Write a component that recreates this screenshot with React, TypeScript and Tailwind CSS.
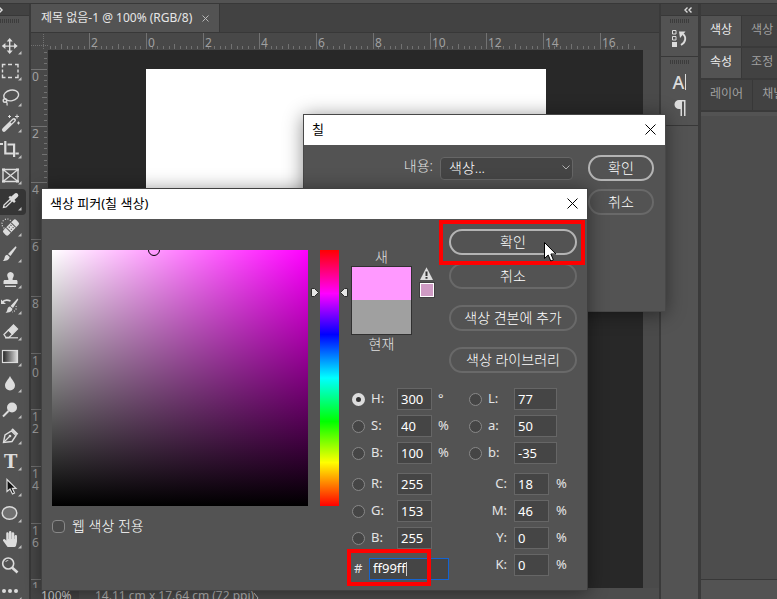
import { useState, type ReactNode } from "react";
import { FaHandPaper } from "react-icons/fa";

const TOOLS: { name: string; icon: ReactNode }[] = [
  {
    name: "이동",
    icon: (
      <g fill="#dcdcdc" stroke="none">
        <path d="M9 8h1.400v4.400H15v1.400h-4.600V18H9v-4.200H4.500v-1.400H9z" />
        <path d="M9.700 5l3 3.600h-6zM9.700 21l3-3.600h-6zM1.800 13.100l3.600-3v6zM17.700 13.100l-3.600-3v6z" />
      </g>
    ),
  },
  {
    name: "선택 윤곽",
    icon: <path d="M2.500 8.500v-3h3M8 5.500h4M15 5.500h3v3M18 10.500v3M18 15.500v3h-3M12 18.500H8M5.500 18.500h-3v-3M2.500 13.500v-3" strokeWidth="1.400" />,
  },
  {
    name: "올가미",
    icon: (
      <g strokeWidth="1.400">
        <ellipse cx="11.200" cy="10.500" rx="7.500" ry="5.300" transform="rotate(-12 11 10.500)" />
        <circle cx="5" cy="15.500" r="1.800" />
        <path d="M6 16.500c1 1 2 2 1 4" />
      </g>
    ),
  },
  {
    name: "자동 선택",
    icon: (
      <g>
        <path d="M4 18.800L14 9" strokeWidth="4" strokeLinecap="round" />
        <path d="M11 12l3-3" stroke="#535353" strokeWidth="1.600" />
        <path d="M9.500 4v3M8 5.500h3M17 3.500v4M15 5.500h4M18.500 10.500v3M17 12h3" strokeWidth="1" />
      </g>
    ),
  },
  {
    name: "자르기",
    icon: <path d="M0 7h3M5.300 4v12.500h8M7.500 7.500h6.600V20M15.500 16.500h3.300" strokeWidth="2.200" />,
  },
  {
    name: "프레임",
    icon: (
      <g>
        <path d="M3 6.500h15v12H3zM3 6.500l15 12M18 6.500l-15 12" strokeWidth="1.400" />
        <path d="M2 5.500h3v2H2zM16 5.500h3v2h-3zM2 17.500h3v2H2zM16 17.500h3v2h-3z" fill="#dcdcdc" stroke="none" />
      </g>
    ),
  },
  {
    name: "스포이드",
    icon: (
      <g>
        <path d="M3.500 18.500l.5-2.500 7-6.500 1.800 1.800L6 18z" strokeWidth="1.300" />
        <path d="M9.300 7.500l5.600 5.600" strokeWidth="2.400" />
        <path d="M12 10l4-3.600" strokeWidth="4.600" strokeLinecap="round" />
      </g>
    ),
  },
  {
    name: "복구 브러시",
    icon: (
      <g>
        <circle cx="7" cy="9" r="5" strokeWidth="1.200" strokeDasharray="1 1.600" />
        <g transform="rotate(-45 11 12.500)">
          <rect x="2" y="9" width="18" height="7" rx="2" fill="#dcdcdc" stroke="none" />
          <path d="M7.500 9v7M14.500 9v7" stroke="#535353" strokeWidth="1" />
          <path d="M9.500 11h1M12 11h1M9.500 14h1M12 14h1" stroke="#535353" strokeWidth="1.400" />
        </g>
      </g>
    ),
  },
  {
    name: "브러시",
    icon: (
      <g fill="#dcdcdc" stroke="none">
        <path d="M15.600 5.300c1 .5 1 1 .6 1.700L10.500 15 8 13z" />
        <path d="M7.200 13.700l2.500 2.200c-.5 3-3.500 4-7 4 1.600-1 1.500-2 2-3.700.3-1.400 1.300-2.300 2.500-2.500z" />
      </g>
    ),
  },
  {
    name: "복제 도장",
    icon: (
      <g fill="#dcdcdc" stroke="none">
        <path d="M10.500 5a3.300 3.300 0 0 1 3 4.700c-.8 1.500-1 2.300-.8 3.300H16c1 0 1.500.6 1.500 1.500V17h-14v-2.500c0-.9.500-1.500 1.500-1.500h3.300c.2-1 0-1.800-.8-3.300a3.300 3.300 0 0 1 3-4.700z" />
        <path d="M5 18.600h11V20H5z" />
      </g>
    ),
  },
  {
    name: "작업 내역 브러시",
    icon: (
      <g>
        <path d="M17.500 5.500c1 .5.800 1 .4 1.700L13 15l-2.500-2zM10 13.500l2.500 2.200c-.5 3-3.500 4-7 4 1.600-1 1.500-2 2-3.700.3-1.400 1.300-2.300 2.500-2.500z" fill="#dcdcdc" stroke="none" />
        <path d="M2 9.500C4 7 7 6.500 10.500 8" strokeWidth="1.500" />
        <path d="M1 6.500v4.500h5z" fill="#dcdcdc" stroke="none" />
        <path d="M16 13c1 2 0 5-4 6" strokeWidth="1.200" strokeDasharray="1 1.600" />
      </g>
    ),
  },
  {
    name: "지우개",
    icon: (
      <g>
        <path d="M4 15.500l4.500-4.500 4 4-3.500 3.500H6z" strokeWidth="1.300" />
        <path d="M8.500 11L13.500 6l4 4-5 5z" fill="#dcdcdc" strokeWidth="1.300" />
        <path d="M5 18.800h13" strokeWidth="1.200" />
      </g>
    ),
  },
  {
    name: "그레이디언트",
    icon: (
      <g>
        <defs>
          <linearGradient id="tool-gradient">
            <stop offset="0" stopColor="#222" />
            <stop offset="1" stopColor="#ddd" />
          </linearGradient>
        </defs>
        <rect x="2.500" y="5.500" width="15" height="12" fill="url(#tool-gradient)" strokeWidth="1.200" />
      </g>
    ),
  },
  {
    name: "흐림 효과",
    icon: <path d="M10 5c1.500 3.500 5 6 5 9.500a5 5 0 0 1-10 0C5 11 8.500 8.500 10 5z" fill="#dcdcdc" stroke="none" />,
  },
  {
    name: "닷지",
    icon: (
      <g>
        <circle cx="12" cy="10.500" r="5" fill="#dcdcdc" stroke="none" />
        <path d="M8.500 14L3 19.500" strokeWidth="2" />
      </g>
    ),
  },
  {
    name: "펜",
    icon: (
      <g strokeWidth="1.400">
        <path d="M3.500 19.500l1.500-7.500 6.500-4 4.500 4.500-4 6z" />
        <path d="M3.500 19.500l6-6" strokeWidth="1.200" />
        <circle cx="10" cy="13" r="1.300" fill="#dcdcdc" stroke="none" />
        <path d="M12 6l5.500 5.500" strokeWidth="2.200" />
      </g>
    ),
  },
  {
    name: "문자",
    icon: (
      <text x="4" y="19" fontSize="18" fontWeight="700" fontFamily="DejaVu Serif, serif" fill="#dcdcdc" stroke="none">
        T
      </text>
    ),
  },
  {
    name: "패스 선택",
    icon: <path d="M7 4.500v12l3-2.500 2.500 5 2-1-2.200-4.700h3.700z" fill="#111" strokeWidth="1.200" />,
  },
  { name: "타원", icon: <ellipse cx="9.500" cy="12" rx="7.300" ry="6.300" fill="#717171" strokeWidth="1.500" /> },
  { name: "손", icon: <FaHandPaper x={2} y={4} width={16} height={16} color="#dcdcdc" /> },
  {
    name: "돋보기",
    icon: (
      <g>
        <circle cx="8.200" cy="10.500" r="5.500" strokeWidth="1.600" />
        <path d="M5.500 9c.6-1 1.500-1.500 2.700-1.500" strokeWidth="1" />
        <path d="M12 14.500l5.500 5" strokeWidth="2.600" />
      </g>
    ),
  },
  {
    name: "도구 모음 편집",
    icon: (
      <g fill="#dcdcdc" stroke="none">
        <circle cx="4" cy="12" r="2" />
        <circle cx="10" cy="12" r="2" />
        <circle cx="16" cy="12" r="2" />
      </g>
    ),
  },
];

function Gripper() {
  return (
    <svg width="20" height="4" aria-hidden="true">
      {Array.from({ length: 10 }, (_, i) => (
        <rect key={i} x={i * 2} y="0" width="1" height="4" fill="#3c3c3c" />
      ))}
    </svg>
  );
}

function Toolbar() {
  const [active, setActive] = useState("스포이드");
  return (
    <nav className="flex w-[31px] shrink-0 flex-col overflow-hidden border-r-2 border-[#3a3a3a] bg-[#535353]">
      <div className="flex h-3 shrink-0 items-center border-b border-[#383838] bg-[#424242]">
        <svg width="6" height="8" fill="none" stroke="#dcdcdc" strokeWidth="1.500">
          <path d="M-1 1l3 3-3 3" />
        </svg>
      </div>
      <div className="flex h-[17px] shrink-0 pt-[3px]">
        <Gripper />
      </div>
      {TOOLS.map((tool) => (
        <button
          key={tool.name}
          type="button"
          aria-label={tool.name}
          onClick={() => setActive(tool.name)}
          className={tool.name === active ? "h-[26px] w-[26px] shrink-0 rounded-r bg-[#363636]" : "h-[26px] w-[26px] shrink-0"}
        >
          <svg width="26" height="26" fill="none" stroke="#dcdcdc">
            {tool.icon}
            {tool.name !== "돋보기" && <path d="M21.500 18v3.500H18z" fill="#c0c0c0" stroke="none" />}
          </svg>
        </button>
      ))}
    </nav>
  );
}

// 2 cm at 72 ppi
const MAJOR = 56.7;

function HorizontalRuler() {
  const origin = 115;
  const ticks = Array.from({ length: 104 }, (_, i) => i - 17);
  return (
    <svg className="h-[17px] min-w-0 flex-1" shapeRendering="crispEdges">
      <path d="M12.500 1v16M0 12.500h17" stroke="#707070" strokeDasharray="1 1" />
      {ticks.map((t) => (
        <rect key={t} x={Math.round(origin + (t * MAJOR) / 10)} y={t % 10 === 0 ? 0 : t % 5 === 0 ? 11 : 13} width="1" height={t % 10 === 0 ? 16 : t % 5 === 0 ? 5 : 3} fill="#727272" />
      ))}
      {Array.from({ length: 10 }, (_, i) => i - 1).map((n) => (
        <text key={n} x={Math.round(origin + n * MAJOR) + 2} y="14" fontSize="12" fill="#a0a0a0">
          {Math.abs(n * 2)}
        </text>
      ))}
    </svg>
  );
}

function VerticalRuler() {
  const origin = 19;
  const ticks = Array.from({ length: 97 }, (_, i) => i - 3);
  return (
    <svg className="h-full w-[17px] shrink-0 bg-[#484848]" shapeRendering="crispEdges">
      {ticks.map((t) => (
        <rect key={t} x={t % 10 === 0 ? 0 : t % 5 === 0 ? 11 : 13} y={Math.round(origin + (t * MAJOR) / 10)} width={t % 10 === 0 ? 16 : t % 5 === 0 ? 5 : 3} height="1" fill="#727272" />
      ))}
      {Array.from({ length: 10 }, (_, i) => i).map((n) =>
        String(n * 2)
          .split("")
          .map((digit, k) => (
            <text key={`${n}-${k}`} x="1" y={Math.round(origin + n * MAJOR) + 12 + k * 12} fontSize="12" fill="#a0a0a0">
              {digit}
            </text>
          ))
      )}
    </svg>
  );
}

function DocumentArea() {
  return (
    <main className="flex min-w-0 flex-1 flex-col">
      <div className="flex h-[29px] shrink-0 border-b border-[#383838] bg-[#424242]">
        <div className="flex items-center gap-[10px] border-r border-[#383838] bg-[#535353] pr-[10px] pl-[10px] text-xs text-[#e6e6e6]">
          <span>제목 없음-1 @ 100% (RGB/8)</span>
          <button type="button" aria-label="닫기">
            <svg width="7" height="7" stroke="#b8b8b8">
              <path d="M.5 .5l6 6M6.500 .5l-6 6" />
            </svg>
          </button>
        </div>
      </div>
      <div className="flex h-[17px] shrink-0 bg-[#484848] pr-4">
        <HorizontalRuler />
      </div>
      <div className="flex min-h-0 flex-1">
        <VerticalRuler />
        <div className="min-w-0 flex-1 overflow-hidden bg-[#282828] pt-[19px] pl-[98px]">
          <div className="h-[500px] w-[400px] bg-white" />
        </div>
        <div className="w-4 shrink-0 bg-[#4a4a4a]" />
      </div>
      <footer className="flex h-[11px] shrink-0 overflow-hidden bg-[#4d4d4d] text-xs text-[#d8d8d8]">
        <span className="w-12 shrink-0 bg-[#454545] pl-[10px]">100%</span>
        <span className="w-[174px] shrink-0 pl-4 whitespace-nowrap text-[#b8b8b8]">14.11 cm x 17.64 cm (72 ppi)</span>
        <svg width="6" height="14" fill="none" stroke="#c0c0c0" className="mt-1 shrink-0">
          <path d="M1 1l4 5-4 5" />
        </svg>
      </footer>
    </main>
  );
}

function IconDock() {
  return (
    <aside className="flex w-[41px] shrink-0 flex-col border-x-2 border-[#3a3a3a] bg-[#535353]">
      <div className="flex h-3 items-center justify-center border-b border-[#383838] bg-[#424242] pl-4">
        <svg width="8" height="6" fill="none" stroke="#dcdcdc" strokeWidth="1.400">
          <path d="M3.500 .5L1 3l2.500 2.500M7.500 .5L5 3l2.500 2.500" />
        </svg>
      </div>
      <div className="flex h-[41px] flex-col items-center gap-[7px] border-b border-[#383838] pt-[3px]">
        <Gripper />
        <button type="button" aria-label="작업 내역">
          <svg width="17" height="17" fill="none" stroke="#dcdcdc">
            <path d="M1.500 .5h3.500v3.500H1.500zM1.500 6.500h3.500V10H1.500z" />
            <path d="M1 12h5v5H1z" fill="#dcdcdc" stroke="none" />
            <path d="M8 1.500h6.500L9 8z" fill="#dcdcdc" stroke="none" />
            <path d="M12 4c3.500 3 3 8-2 11" strokeWidth="1.800" />
          </svg>
        </button>
      </div>
      <div className="flex h-[69px] flex-col items-center gap-2 border-b border-[#383838] pt-[3px]">
        <Gripper />
        <button type="button" aria-label="문자" className="flex h-5 items-center gap-px">
          <span className="text-lg leading-4 font-medium text-[#dcdcdc]">A</span>
          <span className="h-4 w-px bg-[#dcdcdc]" />
        </button>
        <button type="button" aria-label="단락">
          <svg width="12" height="16" fill="#dcdcdc">
            <path d="M11.500 0v16H10V1.400H8V16H6.500V9H5A4.500 4.500 0 0 1 5 0z" />
          </svg>
        </button>
      </div>
    </aside>
  );
}

function PanelTabs({ tabs, active }: { tabs: string[]; active: number }) {
  return (
    <div className="flex h-8 shrink-0 overflow-hidden border-b-2 border-[#3a3a3a] bg-[#424242] text-xs whitespace-nowrap">
      {tabs.map((tab, i) => (
        <button
          key={tab}
          type="button"
          className={
            i === active
              ? "shrink-0 border-r border-[#383838] bg-[#535353] px-[9px] pb-[2px] text-[#ececec]"
              : "shrink-0 border-r border-[#383838] px-[9px] pb-[2px] text-[#a0a0a0]"
          }
        >
          {tab}
        </button>
      ))}
    </div>
  );
}

function Panels() {
  return (
    <aside className="flex w-[77px] shrink-0 flex-col overflow-hidden border-l border-[#3a3a3a] bg-[#4d4d4d]">
      <div className="h-3 shrink-0 border-b border-[#383838] bg-[#424242]" />
      <PanelTabs tabs={["색상", "색상 견본"]} active={0} />
      <PanelTabs tabs={["속성", "조정"]} active={0} />
      <PanelTabs tabs={["레이어", "채널"]} active={-1} />
      <div className="h-1 bg-[#535353]" />
      <div className="mt-auto h-5 border-t border-[#383838] bg-[#535353]" />
    </aside>
  );
}

function TitleBar({ title }: { title: string }) {
  return (
    <header className="flex h-[30px] items-center justify-between bg-white pr-[9px] pb-px pl-2 text-[13px] text-black">
      <h2>{title}</h2>
      <button type="button" aria-label="닫기">
        <svg width="11" height="11" stroke="#000" strokeWidth="1">
          <path d="M.5 .5l10 10M10.500 .5l-10 10" />
        </svg>
      </button>
    </header>
  );
}

function PillButton({ children, primary }: { children: ReactNode; primary?: boolean }) {
  return (
    <button
      type="button"
      className={
        primary
          ? "h-[26px] w-full rounded-full border-2 border-[#b4b4b4] text-sm leading-5 font-light text-white"
          : "h-[26px] w-full rounded-full border-2 border-[#696969] text-sm leading-5 font-light text-white"
      }
    >
      {children}
    </button>
  );
}

function FillDialog() {
  return (
    <section role="dialog" aria-label="칠" className="absolute top-[114px] left-[303px] h-[198px] w-[363px] border border-[#484848] bg-[#535353] shadow-[0_2px_18px_rgba(0,0,0,0.45)]">
      <TitleBar title="칠" />
      <div className="flex items-start pt-[10px] pr-[11px]">
        <label htmlFor="contents" className="ml-auto pr-[7px] text-sm leading-[22px] font-light text-[#e0e0e0]">
          내용:
        </label>
        <div className="relative mr-[15px] w-[133px]">
          <select id="contents" className="h-[23px] w-full appearance-none rounded-sm border border-[#666] bg-[#454545] px-2 pb-px text-sm leading-5 font-light text-white">
            <option>색상...</option>
          </select>
          <svg width="8" height="6" fill="none" stroke="#b0b0b0" className="pointer-events-none absolute top-[10px] right-[3px]">
            <path d="M.5 .5L4 4 7.500 .5" />
          </svg>
        </div>
        <div className="flex w-[66px] flex-col gap-2">
          <PillButton primary>확인</PillButton>
          <PillButton>취소</PillButton>
        </div>
      </div>
    </section>
  );
}

type FieldProps = { id: string; label: string; value: string; unit?: string };

function ModeField({ id, label, value, unit, wide }: FieldProps & { wide?: boolean }) {
  return (
    <div className="flex h-[22px] items-center">
      <input
        type="radio"
        name="mode"
        id={`mode-${id}`}
        defaultChecked={id === "h"}
        className="h-[13px] w-[13px] appearance-none rounded-full border border-[#888] bg-[#454545] checked:border-4 checked:border-[#dcdcdc] checked:bg-[#333]"
      />
      <label htmlFor={`mode-${id}`} className="w-8 pl-[6px] text-[13px]">
        {label}
      </label>
      <input
        aria-label={label}
        defaultValue={value}
        className={
          wide
            ? "h-[22px] w-[43px] border border-[#666] bg-[#454545] px-[3px] pb-px text-[13px] text-white"
            : "h-[22px] w-[35px] border border-[#666] bg-[#454545] px-[3px] pb-px text-[13px] text-white"
        }
      />
      {unit && <span className="pl-[6px] text-[13px]">{unit}</span>}
    </div>
  );
}

function InkField({ id, label, value }: FieldProps) {
  return (
    <div className="flex h-[22px] items-center">
      <label htmlFor={id} className="w-[45px] pr-[7px] text-right text-[13px]">
        {label}
      </label>
      <input id={id} defaultValue={value} className="h-[22px] w-[35px] border border-[#666] bg-[#454545] px-[3px] pb-px text-[13px] text-white" />
      <span className="pl-[7px] text-[13px]">%</span>
    </div>
  );
}

function ColorFields() {
  const [hex, setHex] = useState("ff99ff");
  return (
    <div className="mt-[15px] flex text-[#e4e4e4]">
      <div className="flex w-[118px] flex-col gap-[9px] pl-px">
        <div className="flex flex-col gap-[5px]">
          <ModeField id="h" label="H:" value="300" unit="°" />
          <ModeField id="s" label="S:" value="40" unit="%" />
          <ModeField id="v" label="B:" value="100" unit="%" />
        </div>
        <div className="flex flex-col gap-[5px]">
          <ModeField id="r" label="R:" value="255" />
          <ModeField id="g" label="G:" value="153" />
          <ModeField id="blue" label="B:" value="255" />
        </div>
        <div className="flex h-[22px] items-center text-[13px]">
          <label htmlFor="hex" className="w-[17px] shrink-0 pl-[2px]">
            #
          </label>
          <div className="flex h-[22px] w-20 shrink-0 items-center border border-[#1464d2] bg-[#454545] pl-[3px]">
            <input id="hex" value={hex} onChange={(e) => setHex(e.target.value)} className="field-sizing-content bg-transparent text-[13px] text-white outline-none" />
            <span className="h-[14px] w-px bg-[#d0d0d0]" />
          </div>
        </div>
      </div>
      <div className="flex flex-col gap-[9px]">
        <div className="flex flex-col gap-[5px]">
          <ModeField id="l" label="L:" value="77" wide />
          <ModeField id="a" label="a:" value="50" wide />
          <ModeField id="b" label="b:" value="-35" wide />
        </div>
        <div className="flex flex-col gap-[5px]">
          <InkField id="c" label="C:" value="18" />
          <InkField id="m" label="M:" value="46" />
          <InkField id="y" label="Y:" value="0" />
          <InkField id="k" label="K:" value="0" />
        </div>
      </div>
    </div>
  );
}

function ColorPickerDialog() {
  return (
    <section role="dialog" aria-label="색상 피커" className="absolute top-[188px] left-[41px] w-[547px] border border-[#404040] bg-[#535353] shadow-[0_2px_18px_rgba(0,0,0,0.45)]">
      <TitleBar title="색상 피커(칠 색상)" />
      <div className="flex px-[10px] pt-[10px] pb-[10px]">
        <div className="mt-[21px] w-64 shrink-0">
          {/* saturation / brightness field */}
          <div className="relative h-64 overflow-hidden bg-[linear-gradient(to_top,#000,transparent),linear-gradient(to_right,#fff,#f0f)]">
            <span className="absolute -top-[6px] left-24 h-3 w-3 rounded-full border border-black" />
          </div>
          <label className="mt-3 flex items-center gap-[7px] text-sm leading-4 font-light text-white">
            <input type="checkbox" className="h-[13px] w-[13px] appearance-none rounded-sm border border-[#888] bg-[#4a4a4a]" />웹 색상 전용
          </label>
        </div>
        <div className="relative mt-[21px] ml-3 h-64 w-[19px] shrink-0 bg-[linear-gradient(to_bottom,#f00,#f0f_17%,#00f_33%,#0ff_50%,#0f0_67%,#ff0_83%,#f00)]">
          <svg width="37" height="9" className="absolute top-[38px] -left-[9px]" fill="#e6e6e6" stroke="#2e2e2e" strokeWidth="1">
            <path d="M.5 .5h3l4 4-4 4h-3z" />
            <path d="M36.500 .5h-3l-4 4 4 4h3z" />
          </svg>
        </div>
        <div className="ml-3 flex-1">
          <div className="flex">
            <div className="flex w-[61px] flex-col items-center pt-[19px] text-sm leading-[18px] font-light text-[#e0e0e0]">
              <span>새</span>
              <div className="w-full border border-[#303030]">
                <div className="h-[33px] bg-[#ff99ff]" />
                <div className="h-[34px] bg-[#a0a0a0]" />
              </div>
              <span>현재</span>
            </div>
            <div className="flex flex-col gap-[2px] pt-[38px] pl-2">
              <svg width="14" height="14" aria-label="인쇄할 수 없는 색상">
                <path d="M6.500 .3L13 13H0z" fill="#dcdcdc" />
                <path d="M6.500 4.500v4.500M6.500 10v1.800" stroke="#333" strokeWidth="2" />
              </svg>
              <button type="button" aria-label="대체 색상" className="h-[14px] w-[14px] border border-white bg-[#cf9bc4] outline outline-[#404040]" />
            </div>
            <div className="ml-auto flex w-32 flex-col gap-4">
              <div className="flex flex-col gap-2">
                <PillButton primary>확인</PillButton>
                <PillButton>취소</PillButton>
              </div>
              <PillButton>색상 견본에 추가</PillButton>
              <PillButton>색상 라이브러리</PillButton>
            </div>
          </div>
          <ColorFields />
        </div>
      </div>
    </section>
  );
}

export default function App() {
  return (
    <div className="relative flex h-screen flex-col overflow-hidden bg-[#535353] font-['Noto_Sans','Noto_Sans_CJK_KR',sans-serif]">
      <div className="h-1 shrink-0 border-b border-[#383838]" />
      <div className="flex min-h-0 flex-1">
        <Toolbar />
        <DocumentArea />
        <IconDock />
        <Panels />
      </div>
      <FillDialog />
      <ColorPickerDialog />
      <div className="pointer-events-none absolute top-[220px] left-[439px] h-[45px] w-[146px] border-4 border-[#ff0000]" />
      <div className="pointer-events-none absolute top-[549px] left-[347px] h-[37px] w-[84px] border-4 border-[#ff0000]" />
      <svg width="14" height="20" className="pointer-events-none absolute top-[242px] left-[544px]" fill="#fff" stroke="#000">
        <path d="M.5 .5v16l3.700-3.500 2.600 6 2.600-1.100L6.900 12h5z" />
      </svg>
    </div>
  );
}
